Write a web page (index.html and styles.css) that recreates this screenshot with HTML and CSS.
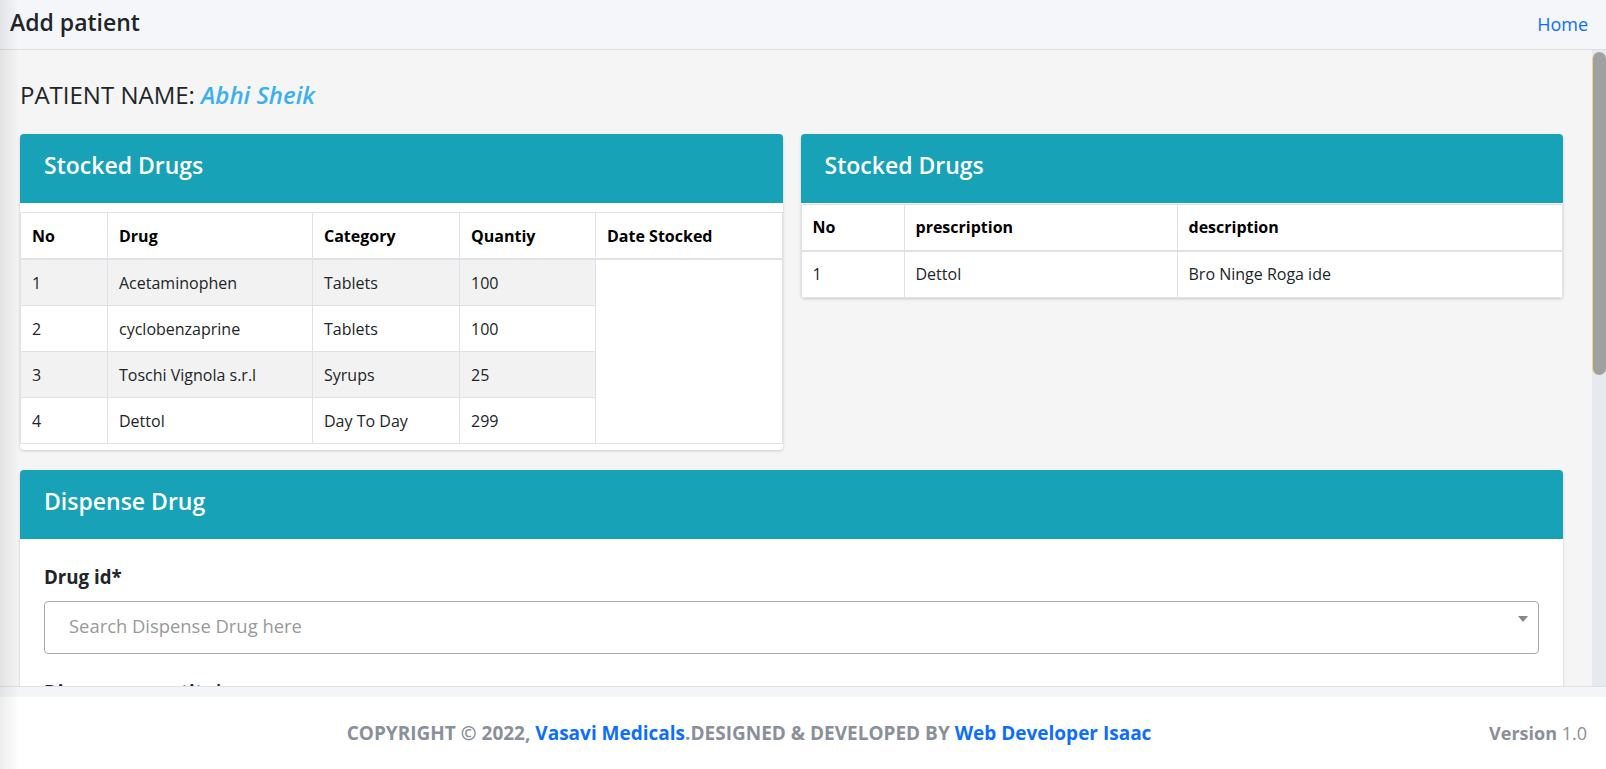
FILE: index.html
```html
<!DOCTYPE html>
<html lang="en">
<head>
<meta charset="utf-8">
<title>Add patient</title>
<link rel="stylesheet" href="styles.css">
</head>
<body>
<div class="app">
  <header class="topbar">
    <h1 class="topbar-title">Add patient</h1>
    <a class="topbar-link" href="#">Home</a>
  </header>

  <div class="body-row">
    <main class="content">
      <div class="inner">
        <h2 class="patient">PATIENT NAME: <em class="patient-name">Abhi Sheik</em></h2>

        <div class="grid2">
          <section class="card">
            <div class="card-head">Stocked Drugs</div>
            <div class="card-body padded-y">
              <table class="tbl striped">
                <colgroup>
                  <col class="c-no"><col class="c-drug"><col class="c-cat"><col class="c-qty"><col>
                </colgroup>
                <thead>
                  <tr><th>No</th><th>Drug</th><th>Category</th><th>Quantiy</th><th>Date Stocked</th></tr>
                </thead>
                <tbody>
                  <tr><td>1</td><td>Acetaminophen</td><td>Tablets</td><td>100</td></tr>
                  <tr><td>2</td><td>cyclobenzaprine</td><td>Tablets</td><td>100</td></tr>
                  <tr><td>3</td><td>Toschi Vignola s.r.l</td><td>Syrups</td><td>25</td></tr>
                  <tr><td>4</td><td>Dettol</td><td>Day To Day</td><td>299</td></tr>
                </tbody>
              </table>
            </div>
          </section>

          <section class="card card-fit">
            <div class="card-head">Stocked Drugs</div>
            <div class="card-body">
              <table class="tbl">
                <colgroup>
                  <col class="r-no"><col class="r-pres"><col>
                </colgroup>
                <thead>
                  <tr><th>No</th><th>prescription</th><th>description</th></tr>
                </thead>
                <tbody>
                  <tr><td>1</td><td>Dettol</td><td>Bro Ninge Roga ide</td></tr>
                </tbody>
              </table>
            </div>
          </section>
        </div>

        <section class="card dispense">
          <div class="card-head">Dispense Drug</div>
          <div class="card-body form-body">
            <div class="field">
              <label class="field-label">Drug id*</label>
              <div class="select">
                <span class="select-placeholder">Search Dispense Drug here</span>
                <span class="select-caret"></span>
              </div>
            </div>
            <div class="field">
              <label class="field-label">Dispense quantity*</label>
              <div class="select">
                <span class="select-placeholder">Enter quantity</span>
              </div>
            </div>
            <div class="field">
              <label class="field-label">Dispense date*</label>
              <div class="select">
                <span class="select-placeholder">dd/mm/yyyy</span>
              </div>
            </div>
            <button class="btn" type="button">Dispense</button>
          </div>
        </section>
      </div>
    </main>
    <div class="scrollbar" aria-hidden="true"><div class="scroll-thumb"></div></div>
  </div>

  <footer class="footer">
    <div class="footer-copy">COPYRIGHT © 2022, <a href="#">Vasavi Medicals</a>.DESIGNED &amp; DEVELOPED BY <a href="#">Web Developer Isaac</a></div>
    <div class="footer-version"><b>Version</b> 1.0</div>
  </footer>
</div>
</body>
</html>
```

FILE: styles.css
```css
* { box-sizing: border-box; }

html, body {
  margin: 0;
  padding: 0;
  height: 100%;
}

body {
  font-family: "Open Sans", "Noto Sans", "DejaVu Sans", sans-serif;
  color: #212529;
  background: #f5f5f5;
  overflow: hidden;
}

body::before {
  content: "";
  position: fixed;
  left: 0;
  top: 0;
  bottom: 0;
  width: 20px;
  background: linear-gradient(to right, rgba(0,0,0,0.07), rgba(0,0,0,0));
  pointer-events: none;
  z-index: 5;
}

.app {
  height: 100vh;
  display: flex;
  flex-direction: column;
}

/* top bar */
.topbar {
  flex: 0 0 50px;
  height: 50px;
  display: flex;
  align-items: center;
  justify-content: space-between;
  padding: 0 18px 6px 10px;
  background: #f5f6fa;
  border-bottom: 1px solid #dcdde1;
}

.topbar-title {
  margin: 0;
  font-size: 23px;
  font-weight: 600;
  line-height: 30px;
  color: #212529;
}

.topbar-link {
  font-size: 18px;
  line-height: 24px;
  color: #0d6efd;
  text-decoration: none;
  margin-top: 4px;
}

/* content + scrollbar */
.body-row {
  flex: 1 1 auto;
  min-height: 0;
  display: flex;
}

.content {
  flex: 1 1 auto;
  min-width: 0;
  overflow: hidden;
  background: #f5f5f5;
}

.scrollbar {
  flex: 0 0 14px;
  width: 14px;
  background: #e6e9ee;
  padding-top: 2px;
}

.scroll-thumb {
  height: 323px;
  background: #a0a0a0;
  border-radius: 7px;
  border-left: 1px solid #f3d58a;
}

.inner {
  padding: 28px 29px 40px 20px;
}

.patient {
  margin: 0 0 23px;
  font-size: 24px;
  line-height: 33px;
  font-weight: 500;
  color: #212529;
}

.patient-name {
  font-style: italic;
  font-weight: 600;
  color: #3cb0ec;
}

.grid2 {
  display: grid;
  grid-template-columns: 1fr 1fr;
  gap: 18px;
  align-items: start;
}

.card {
  background: #fff;
  border-radius: 4px;
  box-shadow: 0 1px 3px rgba(0,0,0,0.18);
  overflow: hidden;
}

.card-head {
  background: #17a2b8;
  color: #fff;
  font-size: 23px;
  font-weight: 600;
  line-height: 34px;
  padding: 14px 24px 21px;
}

.card-body.padded-y { padding: 9px 0 6px; }
.card-fit .card-body { padding-top: 1px; }

/* tables */
.tbl {
  width: 100%;
  border-collapse: collapse;
  table-layout: fixed;
  font-size: 16px;
  border: 1px solid #dee2e6;
}

.tbl th, .tbl td {
  padding: 12px 11px;
  line-height: 21px;
  border: 1px solid #dee2e6;
  text-align: left;
  vertical-align: top;
  white-space: nowrap;
}

.tbl.striped th, .tbl.striped td {
  padding-top: 13px;
  padding-bottom: 11px;
}

.tbl th {
  font-weight: 700;
  color: #000;
  border-bottom-width: 2px;
}

.tbl td {
  font-weight: 400;
  color: #212529;
}

.tbl.striped tbody tr:nth-child(odd) td { background: #f2f2f2; }

.c-no { width: 87px; }
.c-drug { width: 205px; }
.c-cat { width: 147px; }
.c-qty { width: 136px; }

.r-no { width: 103px; }
.r-pres { width: 273px; }

/* dispense */
.dispense { margin-top: 20px; }

.form-body { padding: 24px 24px 24px; }

.field { margin-bottom: 24px; }

.field-label {
  display: block;
  font-size: 18.7px;
  font-weight: 700;
  line-height: 27px;
  margin-bottom: 11px;
  color: #212529;
}

.select {
  position: relative;
  height: 53px;
  border: 1px solid #aaa;
  border-radius: 4px;
  background: #fff;
  display: flex;
  align-items: center;
  padding: 0 24px 4px;
}

.select-placeholder {
  font-size: 18.4px;
  color: #999;
  line-height: 24px;
}

.select-caret {
  position: absolute;
  right: 10px;
  top: 14px;
  width: 0;
  height: 0;
  border-left: 5px solid transparent;
  border-right: 5px solid transparent;
  border-top: 6px solid #888;
}

.btn {
  font-family: inherit;
  font-size: 16px;
  padding: 8px 18px;
  color: #fff;
  background: #17a2b8;
  border: 0;
  border-radius: 4px;
}

/* footer */
.footer {
  flex: 0 0 83px;
  height: 83px;
  display: flex;
  align-items: center;
  padding: 10px 19px 0;
  border-top: 1px solid #dfe1e5;
  background: linear-gradient(#f4f5f8 0, #f4f5f8 10px, #fff 10px);
  color: #8a9099;
  font-size: 19px;
}

.footer-copy {
  flex: 1 1 auto;
  text-align: center;
  font-weight: 700;
  padding-right: 10px;
}

.footer-copy a {
  color: #0d6efd;
  text-decoration: none;
}

.footer-version {
  flex: 0 0 auto;
  font-size: 18px;
  color: #8a9099;
}

.footer-version b { font-weight: 700; }
```
